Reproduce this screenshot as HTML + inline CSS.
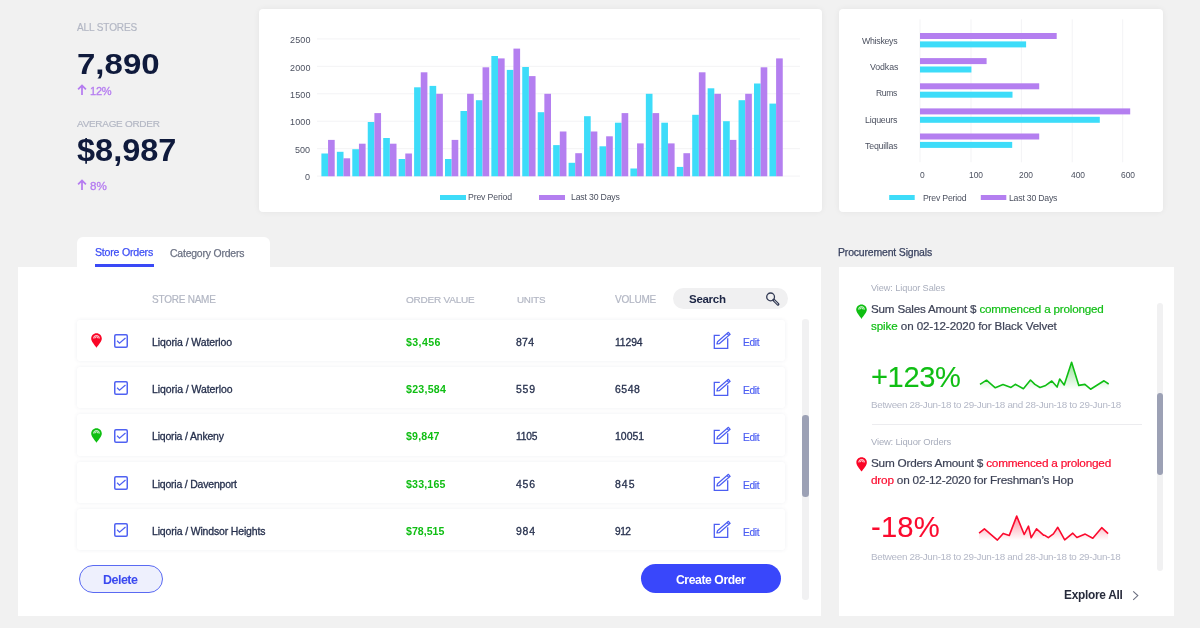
<!DOCTYPE html>
<html><head><meta charset="utf-8"><style>
html,body{margin:0;padding:0;}
body{width:1200px;height:628px;overflow:hidden;background:#f1f1f1;position:relative;font-family:"Liberation Sans",sans-serif;}
.t{position:absolute;white-space:nowrap;will-change:transform;}
.a{position:absolute;}
.card{position:absolute;background:#fff;box-shadow:0 0 6px rgba(0,0,0,0.06);}
.card2{position:absolute;background:#fff;}
.row{position:absolute;background:#fff;border-radius:3px;box-shadow:0 0 4px rgba(30,40,90,0.07);}
</style></head><body>
<div class="card" style="left:259px;top:9px;width:562.5px;height:203px;border-radius:4px"></div><div class="card" style="left:838.5px;top:9px;width:324.5px;height:203px;border-radius:4px"></div><svg class="a" style="left:0;top:0" width="1200" height="220"><rect x="317" y="38.40" width="483" height="1" fill="#f3f3f5"/><rect x="317" y="65.84" width="483" height="1" fill="#f3f3f5"/><rect x="317" y="93.28" width="483" height="1" fill="#f3f3f5"/><rect x="317" y="120.72" width="483" height="1" fill="#f3f3f5"/><rect x="317" y="148.16" width="483" height="1" fill="#f3f3f5"/><rect x="317" y="175.60" width="483" height="1" fill="#f3f3f5"/><rect x="321.40" y="153.50" width="6.65" height="22.80" fill="#3ddcf9"/><rect x="328.05" y="139.90" width="6.65" height="36.40" fill="#b47ff0"/><rect x="336.85" y="151.80" width="6.65" height="24.50" fill="#3ddcf9"/><rect x="343.50" y="158.30" width="6.65" height="18.00" fill="#b47ff0"/><rect x="352.30" y="149.20" width="6.65" height="27.10" fill="#3ddcf9"/><rect x="358.95" y="143.70" width="6.65" height="32.60" fill="#b47ff0"/><rect x="367.75" y="122.00" width="6.65" height="54.30" fill="#3ddcf9"/><rect x="374.40" y="113.10" width="6.65" height="63.20" fill="#b47ff0"/><rect x="383.20" y="138.00" width="6.65" height="38.30" fill="#3ddcf9"/><rect x="389.85" y="143.70" width="6.65" height="32.60" fill="#b47ff0"/><rect x="398.65" y="159.00" width="6.65" height="17.30" fill="#3ddcf9"/><rect x="405.30" y="153.50" width="6.65" height="22.80" fill="#b47ff0"/><rect x="414.10" y="87.30" width="6.65" height="89.00" fill="#3ddcf9"/><rect x="420.75" y="72.30" width="6.65" height="104.00" fill="#b47ff0"/><rect x="429.55" y="85.90" width="6.65" height="90.40" fill="#3ddcf9"/><rect x="436.20" y="93.80" width="6.65" height="82.50" fill="#b47ff0"/><rect x="445.00" y="159.00" width="6.65" height="17.30" fill="#3ddcf9"/><rect x="451.65" y="139.90" width="6.65" height="36.40" fill="#b47ff0"/><rect x="460.45" y="111.00" width="6.65" height="65.30" fill="#3ddcf9"/><rect x="467.10" y="93.80" width="6.65" height="82.50" fill="#b47ff0"/><rect x="475.90" y="100.20" width="6.65" height="76.10" fill="#3ddcf9"/><rect x="482.55" y="67.30" width="6.65" height="109.00" fill="#b47ff0"/><rect x="491.35" y="56.00" width="6.65" height="120.30" fill="#3ddcf9"/><rect x="498.00" y="58.40" width="6.65" height="117.90" fill="#b47ff0"/><rect x="506.80" y="69.90" width="6.65" height="106.40" fill="#3ddcf9"/><rect x="513.45" y="48.60" width="6.65" height="127.70" fill="#b47ff0"/><rect x="522.25" y="67.00" width="6.65" height="109.30" fill="#3ddcf9"/><rect x="528.90" y="76.10" width="6.65" height="100.20" fill="#b47ff0"/><rect x="537.70" y="112.20" width="6.65" height="64.10" fill="#3ddcf9"/><rect x="544.35" y="93.80" width="6.65" height="82.50" fill="#b47ff0"/><rect x="553.15" y="145.10" width="6.65" height="31.20" fill="#3ddcf9"/><rect x="559.80" y="131.50" width="6.65" height="44.80" fill="#b47ff0"/><rect x="568.60" y="162.80" width="6.65" height="13.50" fill="#3ddcf9"/><rect x="575.25" y="153.20" width="6.65" height="23.10" fill="#b47ff0"/><rect x="584.05" y="116.20" width="6.65" height="60.10" fill="#3ddcf9"/><rect x="590.70" y="131.50" width="6.65" height="44.80" fill="#b47ff0"/><rect x="599.50" y="146.30" width="6.65" height="30.00" fill="#3ddcf9"/><rect x="606.15" y="136.30" width="6.65" height="40.00" fill="#b47ff0"/><rect x="614.95" y="122.70" width="6.65" height="53.60" fill="#3ddcf9"/><rect x="621.60" y="113.10" width="6.65" height="63.20" fill="#b47ff0"/><rect x="630.40" y="168.50" width="6.65" height="7.80" fill="#3ddcf9"/><rect x="637.05" y="143.40" width="6.65" height="32.90" fill="#b47ff0"/><rect x="645.85" y="93.80" width="6.65" height="82.50" fill="#3ddcf9"/><rect x="652.50" y="113.10" width="6.65" height="63.20" fill="#b47ff0"/><rect x="661.30" y="122.70" width="6.65" height="53.60" fill="#3ddcf9"/><rect x="667.95" y="143.40" width="6.65" height="32.90" fill="#b47ff0"/><rect x="676.75" y="166.90" width="6.65" height="9.40" fill="#3ddcf9"/><rect x="683.40" y="153.20" width="6.65" height="23.10" fill="#b47ff0"/><rect x="692.20" y="114.80" width="6.65" height="61.50" fill="#3ddcf9"/><rect x="698.85" y="72.30" width="6.65" height="104.00" fill="#b47ff0"/><rect x="707.65" y="88.30" width="6.65" height="88.00" fill="#3ddcf9"/><rect x="714.30" y="93.80" width="6.65" height="82.50" fill="#b47ff0"/><rect x="723.10" y="121.20" width="6.65" height="55.10" fill="#3ddcf9"/><rect x="729.75" y="139.90" width="6.65" height="36.40" fill="#b47ff0"/><rect x="738.55" y="100.20" width="6.65" height="76.10" fill="#3ddcf9"/><rect x="745.20" y="93.80" width="6.65" height="82.50" fill="#b47ff0"/><rect x="754.00" y="83.50" width="6.65" height="92.80" fill="#3ddcf9"/><rect x="760.65" y="67.30" width="6.65" height="109.00" fill="#b47ff0"/><rect x="769.45" y="103.60" width="6.65" height="72.70" fill="#3ddcf9"/><rect x="776.10" y="58.40" width="6.65" height="117.90" fill="#b47ff0"/><rect x="440" y="195" width="26" height="5" fill="#3ddcf9"/><rect x="539" y="195" width="26" height="5" fill="#b47ff0"/><rect x="919.5" y="19.3" width="1" height="143" fill="#f3f3f5"/><rect x="970.5" y="19.3" width="1" height="143" fill="#f3f3f5"/><rect x="1020.9" y="19.3" width="1" height="143" fill="#f3f3f5"/><rect x="1071.7" y="19.3" width="1" height="143" fill="#f3f3f5"/><rect x="1122.2" y="19.3" width="1" height="143" fill="#f3f3f5"/><rect x="920" y="33.0" width="136.70" height="6" fill="#b47ff0"/><rect x="920" y="41.40" width="106.10" height="6" fill="#3ddcf9"/><rect x="920" y="58.1" width="66.60" height="6" fill="#b47ff0"/><rect x="920" y="66.50" width="51.40" height="6" fill="#3ddcf9"/><rect x="920" y="83.3" width="119.20" height="6" fill="#b47ff0"/><rect x="920" y="91.70" width="92.50" height="6" fill="#3ddcf9"/><rect x="920" y="108.4" width="210.20" height="6" fill="#b47ff0"/><rect x="920" y="116.80" width="179.80" height="6" fill="#3ddcf9"/><rect x="920" y="133.5" width="119.20" height="6" fill="#b47ff0"/><rect x="920" y="141.90" width="92.20" height="6" fill="#3ddcf9"/><rect x="889.2" y="195" width="25.5" height="5" fill="#3ddcf9"/><rect x="980.8" y="195" width="25.5" height="5" fill="#b47ff0"/></svg><div class="card2" style="left:77px;top:237px;width:193px;height:40px;border-radius:6px 6px 0 0"></div><div class="card2" style="left:18px;top:267px;width:803px;height:349px"></div><div class="a" style="left:95px;top:264px;width:58.5px;height:3px;background:#3a49f6"></div><div class="a" style="left:672.5px;top:288px;width:115px;height:21px;border-radius:11px;background:#f0f0f1"></div><svg class="a" style="left:764px;top:290px" width="18" height="18" viewBox="0 0 18 18"><circle cx="6.6" cy="6.9" r="3.9" fill="none" stroke="#333b55" stroke-width="1.3"/><path d="M9.7 10.0L14.0 14.3" stroke="#333b55" stroke-width="2.9" stroke-linecap="round"/><path d="M10.4 10.7L13.6 13.9" stroke="#f0f0f1" stroke-width="0.9" stroke-linecap="round"/></svg><div class="row" style="left:77px;top:319.5px;width:708px;height:41.5px"></div><svg class="a" style="left:90.6px;top:333.0px" width="11" height="15" viewBox="0 0 11 15"><path d="M5.5 0.3C8.5 0.3 10.8 2.6 10.8 5.5C10.8 8.6 7.6 11.5 5.5 14.8C3.4 11.5 0.2 8.6 0.2 5.5C0.2 2.6 2.5 0.3 5.5 0.3Z" fill="#fa0526"/><path d="M2.6 5.4A2.9 2.9 0 0 1 8.4 5.4" fill="none" stroke="#fff" stroke-width="0.9"/><path d="M3.9 5.4A1.6 1.6 0 0 1 7.1 5.4" fill="none" stroke="#fff" stroke-width="0.9"/><path d="M2.2 5.5H8.8" stroke="#fa0526" stroke-width="0"/></svg><svg class="a" style="left:114px;top:334px" width="14" height="14" viewBox="0 0 14 14"><rect x="0.75" y="0.75" width="12.5" height="12.5" rx="1.2" fill="none" stroke="#5062f2" stroke-width="1.5"/><path d="M3.1 6.8L5.5 9.2L11.5 4.0" fill="none" stroke="#5062f2" stroke-width="1.3"/></svg><svg class="a" style="left:713px;top:331.00px" width="18" height="18" viewBox="0 0 18 18"><path d="M6.8 4.3H1.3V17.4H14.7V7.3" fill="none" stroke="#4c5ef2" stroke-width="1.3"/><path d="M3.9 13.0L4.55 10.72L15.45 1.32L17.15 3.28L6.25 12.68Z M14.05 2.52L15.75 4.48" fill="none" stroke="#4c5ef2" stroke-width="1.2" stroke-linejoin="round"/></svg><div class="row" style="left:77px;top:366.84px;width:708px;height:41.5px"></div><svg class="a" style="left:114px;top:381px" width="14" height="14" viewBox="0 0 14 14"><rect x="0.75" y="0.75" width="12.5" height="12.5" rx="1.2" fill="none" stroke="#5062f2" stroke-width="1.5"/><path d="M3.1 6.8L5.5 9.2L11.5 4.0" fill="none" stroke="#5062f2" stroke-width="1.3"/></svg><svg class="a" style="left:713px;top:378.34px" width="18" height="18" viewBox="0 0 18 18"><path d="M6.8 4.3H1.3V17.4H14.7V7.3" fill="none" stroke="#4c5ef2" stroke-width="1.3"/><path d="M3.9 13.0L4.55 10.72L15.45 1.32L17.15 3.28L6.25 12.68Z M14.05 2.52L15.75 4.48" fill="none" stroke="#4c5ef2" stroke-width="1.2" stroke-linejoin="round"/></svg><div class="row" style="left:77px;top:414.18px;width:708px;height:41.5px"></div><svg class="a" style="left:90.6px;top:427.68px" width="11" height="15" viewBox="0 0 11 15"><path d="M5.5 0.3C8.5 0.3 10.8 2.6 10.8 5.5C10.8 8.6 7.6 11.5 5.5 14.8C3.4 11.5 0.2 8.6 0.2 5.5C0.2 2.6 2.5 0.3 5.5 0.3Z" fill="#0fbf12"/><path d="M2.6 5.4A2.9 2.9 0 0 1 8.4 5.4" fill="none" stroke="#fff" stroke-width="0.9"/><path d="M3.9 5.4A1.6 1.6 0 0 1 7.1 5.4" fill="none" stroke="#fff" stroke-width="0.9"/><path d="M2.2 5.5H8.8" stroke="#0fbf12" stroke-width="0"/></svg><svg class="a" style="left:114px;top:429px" width="14" height="14" viewBox="0 0 14 14"><rect x="0.75" y="0.75" width="12.5" height="12.5" rx="1.2" fill="none" stroke="#5062f2" stroke-width="1.5"/><path d="M3.1 6.8L5.5 9.2L11.5 4.0" fill="none" stroke="#5062f2" stroke-width="1.3"/></svg><svg class="a" style="left:713px;top:425.68px" width="18" height="18" viewBox="0 0 18 18"><path d="M6.8 4.3H1.3V17.4H14.7V7.3" fill="none" stroke="#4c5ef2" stroke-width="1.3"/><path d="M3.9 13.0L4.55 10.72L15.45 1.32L17.15 3.28L6.25 12.68Z M14.05 2.52L15.75 4.48" fill="none" stroke="#4c5ef2" stroke-width="1.2" stroke-linejoin="round"/></svg><div class="row" style="left:77px;top:461.52px;width:708px;height:41.5px"></div><svg class="a" style="left:114px;top:476px" width="14" height="14" viewBox="0 0 14 14"><rect x="0.75" y="0.75" width="12.5" height="12.5" rx="1.2" fill="none" stroke="#5062f2" stroke-width="1.5"/><path d="M3.1 6.8L5.5 9.2L11.5 4.0" fill="none" stroke="#5062f2" stroke-width="1.3"/></svg><svg class="a" style="left:713px;top:473.02px" width="18" height="18" viewBox="0 0 18 18"><path d="M6.8 4.3H1.3V17.4H14.7V7.3" fill="none" stroke="#4c5ef2" stroke-width="1.3"/><path d="M3.9 13.0L4.55 10.72L15.45 1.32L17.15 3.28L6.25 12.68Z M14.05 2.52L15.75 4.48" fill="none" stroke="#4c5ef2" stroke-width="1.2" stroke-linejoin="round"/></svg><div class="row" style="left:77px;top:508.86px;width:708px;height:41.5px"></div><svg class="a" style="left:114px;top:523px" width="14" height="14" viewBox="0 0 14 14"><rect x="0.75" y="0.75" width="12.5" height="12.5" rx="1.2" fill="none" stroke="#5062f2" stroke-width="1.5"/><path d="M3.1 6.8L5.5 9.2L11.5 4.0" fill="none" stroke="#5062f2" stroke-width="1.3"/></svg><svg class="a" style="left:713px;top:520.36px" width="18" height="18" viewBox="0 0 18 18"><path d="M6.8 4.3H1.3V17.4H14.7V7.3" fill="none" stroke="#4c5ef2" stroke-width="1.3"/><path d="M3.9 13.0L4.55 10.72L15.45 1.32L17.15 3.28L6.25 12.68Z M14.05 2.52L15.75 4.48" fill="none" stroke="#4c5ef2" stroke-width="1.2" stroke-linejoin="round"/></svg><div class="a" style="left:802.2px;top:319.3px;width:6.4px;height:281px;border-radius:3.2px;background:#f1f1f2"></div><div class="a" style="left:802.1px;top:415.4px;width:6.6px;height:81.2px;border-radius:3.3px;background:#9ca1b5"></div><div class="a" style="left:79px;top:564.6px;width:84.2px;height:28.6px;box-sizing:border-box;border:1.2px solid #5a6af2;border-radius:15px;background:#eef0fd"></div><div class="a" style="left:640.8px;top:564.2px;width:140px;height:28.8px;border-radius:15px;background:#3947fb"></div><div class="card2" style="left:838.5px;top:267px;width:335.5px;height:349px"></div><svg class="a" style="left:856px;top:304px" width="11" height="15.2" viewBox="0 0 11 15"><path d="M5.5 0.3C8.5 0.3 10.8 2.6 10.8 5.5C10.8 8.6 7.6 11.5 5.5 14.8C3.4 11.5 0.2 8.6 0.2 5.5C0.2 2.6 2.5 0.3 5.5 0.3Z" fill="#0fbf12"/><path d="M2.6 5.4A2.9 2.9 0 0 1 8.4 5.4" fill="none" stroke="#fff" stroke-width="0.9"/><path d="M3.9 5.4A1.6 1.6 0 0 1 7.1 5.4" fill="none" stroke="#fff" stroke-width="0.9"/><path d="M2.2 5.5H8.8" stroke="#0fbf12" stroke-width="0"/></svg><div class="a" style="left:872px;top:424.3px;width:269.5px;height:1px;background:#ececef"></div><svg class="a" style="left:856px;top:457px" width="11.2" height="14.8" viewBox="0 0 11 15"><path d="M5.5 0.3C8.5 0.3 10.8 2.6 10.8 5.5C10.8 8.6 7.6 11.5 5.5 14.8C3.4 11.5 0.2 8.6 0.2 5.5C0.2 2.6 2.5 0.3 5.5 0.3Z" fill="#fa0526"/><path d="M2.6 5.4A2.9 2.9 0 0 1 8.4 5.4" fill="none" stroke="#fff" stroke-width="0.9"/><path d="M3.9 5.4A1.6 1.6 0 0 1 7.1 5.4" fill="none" stroke="#fff" stroke-width="0.9"/><path d="M2.2 5.5H8.8" stroke="#fa0526" stroke-width="0"/></svg><svg class="a" style="left:0;top:0" width="1200" height="628"><defs><linearGradient id="gg" x1="0" y1="362.3" x2="0" y2="389.5" gradientUnits="userSpaceOnUse"><stop offset="0" stop-color="#10be14" stop-opacity="0.45"/><stop offset="1" stop-color="#10be14" stop-opacity="0"/></linearGradient></defs><path d="M980,389.5 L980.0,384.4 L986.5,380.2 L995.3,387.8 L1003.0,384.6 L1011.0,387.4 L1015.3,384.3 L1023.4,388.8 L1030.5,380.0 L1034.9,384.4 L1040.0,387.5 L1045.7,385.4 L1051.8,381.0 L1057.1,387.1 L1059.7,379.1 L1064.2,384.9 L1071.6,362.3 L1078.8,385.4 L1084.9,384.4 L1090.6,389.2 L1104.0,380.8 L1108.7,384.0 L1108.7,389.5 Z" fill="url(#gg)"/><polyline points="980.0,384.4 986.5,380.2 995.3,387.8 1003.0,384.6 1011.0,387.4 1015.3,384.3 1023.4,388.8 1030.5,380.0 1034.9,384.4 1040.0,387.5 1045.7,385.4 1051.8,381.0 1057.1,387.1 1059.7,379.1 1064.2,384.9 1071.6,362.3 1078.8,385.4 1084.9,384.4 1090.6,389.2 1104.0,380.8 1108.7,384.0" fill="none" stroke="#10be14" stroke-width="1.6" stroke-linejoin="round"/></svg><svg class="a" style="left:0;top:0" width="1200" height="628"><defs><linearGradient id="rg" x1="0" y1="516.1" x2="0" y2="540.5" gradientUnits="userSpaceOnUse"><stop offset="0" stop-color="#fb0a2e" stop-opacity="0.45"/><stop offset="1" stop-color="#fb0a2e" stop-opacity="0"/></linearGradient></defs><path d="M979.1,540.5 L979.1,533.1 L984.4,528.8 L997.4,540.1 L1003.2,533.4 L1009.3,535.4 L1016.7,516.1 L1024.2,534.5 L1028.5,526.2 L1031.2,537.7 L1036.5,528.8 L1043.5,535.1 L1044.8,535.3 L1048.3,537.7 L1053.4,533.9 L1057.8,527.3 L1064.7,539.9 L1072.8,533.2 L1076.9,537.5 L1085.2,534.1 L1092.8,538.3 L1101.7,527.7 L1108.1,533.6 L1108.1,540.5 Z" fill="url(#rg)"/><polyline points="979.1,533.1 984.4,528.8 997.4,540.1 1003.2,533.4 1009.3,535.4 1016.7,516.1 1024.2,534.5 1028.5,526.2 1031.2,537.7 1036.5,528.8 1043.5,535.1 1044.8,535.3 1048.3,537.7 1053.4,533.9 1057.8,527.3 1064.7,539.9 1072.8,533.2 1076.9,537.5 1085.2,534.1 1092.8,538.3 1101.7,527.7 1108.1,533.6" fill="none" stroke="#fb0a2e" stroke-width="1.6" stroke-linejoin="round"/></svg><div class="a" style="left:1156.7px;top:302.8px;width:6.5px;height:268.5px;border-radius:3.2px;background:#f1f1f2"></div><div class="a" style="left:1156.7px;top:393px;width:6.5px;height:81.7px;border-radius:3.2px;background:#9ca1b5"></div><svg class="a" style="left:1131px;top:590px" width="10" height="11" viewBox="0 0 10 11"><path d="M2.2 1.4L6.8 5.6L2.2 9.8" fill="none" stroke="#6b6f80" stroke-width="1.1"/></svg><svg class="a" style="left:77px;top:84px" width="10" height="12" viewBox="0 0 10 12"><path d="M5 11V1.6M1.1 5.4L5 1.4L8.9 5.4" fill="none" stroke="#b57cf0" stroke-width="1.75"/></svg><svg class="a" style="left:77px;top:178.8px" width="10" height="12" viewBox="0 0 10 12"><path d="M5 11V1.6M1.1 5.4L5 1.4L8.9 5.4" fill="none" stroke="#b57cf0" stroke-width="1.75"/></svg>
<div class="t" id="s1" style="top:22.73px;font-size:10.00px;line-height:10.00px;color:#b3b7c4;font-weight:400;letter-spacing:-0.111px;left:77.40px;-webkit-text-stroke:0.2px currentColor;">ALL STORES</div><div class="t" id="s2" style="top:48.52px;font-size:29.51px;line-height:29.51px;color:#0f1a3c;font-weight:700;letter-spacing:0.000px;left:76.80px;transform:scaleX(1.1196);transform-origin:left center;">7,890</div><div class="t" id="s3" style="top:86.44px;font-size:11.06px;line-height:11.06px;color:#b57cf0;font-weight:400;letter-spacing:-0.250px;left:90.00px;-webkit-text-stroke:0.3px currentColor;">12%</div><div class="t" id="s4" style="top:119.49px;font-size:9.93px;line-height:9.93px;color:#b3b7c4;font-weight:400;letter-spacing:-0.250px;left:77.00px;-webkit-text-stroke:0.2px currentColor;">AVERAGE ORDER</div><div class="t" id="s5" style="top:135.44px;font-size:31.25px;line-height:31.25px;color:#0f1a3c;font-weight:700;letter-spacing:0.000px;left:77.40px;transform:scaleX(1.0400);transform-origin:left center;">$8,987</div><div class="t" id="s6" style="top:179.75px;font-size:11.63px;line-height:11.63px;color:#b57cf0;font-weight:400;letter-spacing:0.000px;left:90.00px;-webkit-text-stroke:0.3px currentColor;">8%</div><div class="t" id="ya0" style="top:36.47px;font-size:9.01px;line-height:9.01px;color:#4c5160;font-weight:400;letter-spacing:0.167px;right:889.80px;text-align:right;">2500</div><div class="t" id="ya1" style="top:63.91px;font-size:9.01px;line-height:9.01px;color:#4c5160;font-weight:400;letter-spacing:0.167px;right:889.80px;text-align:right;">2000</div><div class="t" id="ya2" style="top:91.35px;font-size:9.01px;line-height:9.01px;color:#4c5160;font-weight:400;letter-spacing:0.167px;right:889.80px;text-align:right;">1500</div><div class="t" id="ya3" style="top:117.79px;font-size:9.01px;line-height:9.01px;color:#4c5160;font-weight:400;letter-spacing:0.167px;right:889.80px;text-align:right;">1000</div><div class="t" id="ya4" style="top:146.23px;font-size:9.01px;line-height:9.01px;color:#4c5160;font-weight:400;letter-spacing:0.000px;right:889.80px;text-align:right;">500</div><div class="t" id="ya5" style="top:172.67px;font-size:9.01px;line-height:9.01px;color:#4c5160;font-weight:400;letter-spacing:0.000px;right:889.80px;text-align:right;">0</div><div class="t" id="lg1" style="top:192.92px;font-size:8.72px;line-height:8.72px;color:#4c5160;font-weight:400;letter-spacing:-0.150px;left:467.80px;">Prev Period</div><div class="t" id="lg2" style="top:192.92px;font-size:8.72px;line-height:8.72px;color:#4c5160;font-weight:400;letter-spacing:-0.182px;left:571.20px;">Last 30 Days</div><div class="t" id="hl0" style="top:36.75px;font-size:8.80px;line-height:8.80px;color:#4c5160;font-weight:400;letter-spacing:-0.286px;right:302.60px;text-align:right;">Whiskeys</div><div class="t" id="hl1" style="top:63.44px;font-size:8.81px;line-height:8.81px;color:#4c5160;font-weight:400;letter-spacing:-0.100px;right:301.60px;text-align:right;">Vodkas</div><div class="t" id="hl2" style="top:89.05px;font-size:8.56px;line-height:8.56px;color:#4c5160;font-weight:400;letter-spacing:-0.333px;right:302.60px;text-align:right;">Rums</div><div class="t" id="hl3" style="top:115.60px;font-size:8.86px;line-height:8.86px;color:#4c5160;font-weight:400;letter-spacing:-0.214px;right:302.60px;text-align:right;">Liqueurs</div><div class="t" id="hl4" style="top:142.24px;font-size:8.81px;line-height:8.81px;color:#4c5160;font-weight:400;letter-spacing:-0.188px;right:302.60px;text-align:right;">Tequillas</div><div class="t" id="hx0" style="top:171.36px;font-size:8.43px;line-height:8.43px;color:#4c5160;font-weight:400;letter-spacing:0.000px;left:919.80px;">0</div><div class="t" id="hx1" style="top:171.36px;font-size:8.43px;line-height:8.43px;color:#4c5160;font-weight:400;letter-spacing:0.000px;left:969.40px;">100</div><div class="t" id="hx2" style="top:171.36px;font-size:8.43px;line-height:8.43px;color:#4c5160;font-weight:400;letter-spacing:0.000px;left:1019.20px;">200</div><div class="t" id="hx3" style="top:171.36px;font-size:8.43px;line-height:8.43px;color:#4c5160;font-weight:400;letter-spacing:0.000px;left:1071.00px;">400</div><div class="t" id="hx4" style="top:171.36px;font-size:8.43px;line-height:8.43px;color:#4c5160;font-weight:400;letter-spacing:0.000px;left:1120.80px;">600</div><div class="t" id="lg3" style="top:193.92px;font-size:8.72px;line-height:8.72px;color:#4c5160;font-weight:400;letter-spacing:-0.200px;left:923.20px;">Prev Period</div><div class="t" id="lg4" style="top:193.92px;font-size:8.72px;line-height:8.72px;color:#4c5160;font-weight:400;letter-spacing:-0.227px;left:1009.00px;">Last 30 Days</div><div class="t" id="tb1" style="top:247.42px;font-size:10.61px;line-height:10.61px;color:#3d4ef5;font-weight:400;letter-spacing:-0.227px;left:95.00px;-webkit-text-stroke:0.25px currentColor;">Store Orders</div><div class="t" id="tb2" style="top:248.77px;font-size:10.42px;line-height:10.42px;color:#6b7183;font-weight:400;letter-spacing:-0.179px;left:169.80px;-webkit-text-stroke:0.25px currentColor;">Category Orders</div><div class="t" id="h1" style="top:294.84px;font-size:9.99px;line-height:9.99px;color:#b3b7c4;font-weight:400;letter-spacing:-0.222px;left:152.40px;-webkit-text-stroke:0.2px currentColor;">STORE NAME</div><div class="t" id="h2" style="top:294.86px;font-size:9.97px;line-height:9.97px;color:#b3b7c4;font-weight:400;letter-spacing:-0.200px;left:405.80px;-webkit-text-stroke:0.2px currentColor;">ORDER VALUE</div><div class="t" id="h3" style="top:294.99px;font-size:9.82px;line-height:9.82px;color:#b3b7c4;font-weight:400;letter-spacing:-0.250px;left:516.80px;-webkit-text-stroke:0.2px currentColor;">UNITS</div><div class="t" id="h4" style="top:294.81px;font-size:10.03px;line-height:10.03px;color:#b3b7c4;font-weight:400;letter-spacing:-0.200px;left:615.20px;-webkit-text-stroke:0.2px currentColor;">VOLUME</div><div class="t" id="srch" style="top:293.63px;font-size:11.54px;line-height:11.54px;color:#1d2645;font-weight:700;letter-spacing:-0.300px;left:688.60px;">Search</div><div class="t" id="rn0" style="top:337.64px;font-size:10.47px;line-height:10.47px;color:#26304d;font-weight:400;letter-spacing:-0.088px;left:152.40px;-webkit-text-stroke:0.3px currentColor;">Liqoria / Waterloo</div><div class="t" id="rv0" style="top:336.52px;font-size:10.61px;line-height:10.61px;color:#10be14;font-weight:700;letter-spacing:0.400px;left:406.20px;">$3,456</div><div class="t" id="ru0" style="top:337.64px;font-size:10.47px;line-height:10.47px;color:#26304d;font-weight:400;letter-spacing:0.250px;left:516.20px;-webkit-text-stroke:0.3px currentColor;">874</div><div class="t" id="ro0" style="top:337.73px;font-size:10.36px;line-height:10.36px;color:#26304d;font-weight:400;letter-spacing:-0.125px;left:615.20px;-webkit-text-stroke:0.3px currentColor;">11294</div><div class="t" id="re0" style="top:337.87px;font-size:10.19px;line-height:10.19px;color:#4c5ef2;font-weight:400;letter-spacing:-0.333px;left:743.20px;-webkit-text-stroke:0.2px currentColor;">Edit</div><div class="t" id="rn1" style="top:384.98px;font-size:10.47px;line-height:10.47px;color:#26304d;font-weight:400;letter-spacing:-0.059px;left:152.40px;-webkit-text-stroke:0.3px currentColor;">Liqoria / Waterloo</div><div class="t" id="rv1" style="top:383.86px;font-size:10.61px;line-height:10.61px;color:#10be14;font-weight:700;letter-spacing:0.250px;left:406.20px;">$23,584</div><div class="t" id="ru1" style="top:384.98px;font-size:10.47px;line-height:10.47px;color:#26304d;font-weight:400;letter-spacing:0.750px;left:516.20px;-webkit-text-stroke:0.3px currentColor;">559</div><div class="t" id="ro1" style="top:384.98px;font-size:10.47px;line-height:10.47px;color:#26304d;font-weight:400;letter-spacing:0.500px;left:615.20px;-webkit-text-stroke:0.3px currentColor;">6548</div><div class="t" id="re1" style="top:386.21px;font-size:10.19px;line-height:10.19px;color:#4c5ef2;font-weight:400;letter-spacing:-0.333px;left:743.20px;-webkit-text-stroke:0.2px currentColor;">Edit</div><div class="t" id="rn2" style="top:432.32px;font-size:10.47px;line-height:10.47px;color:#26304d;font-weight:400;letter-spacing:-0.167px;left:152.40px;-webkit-text-stroke:0.3px currentColor;">Liqoria / Ankeny</div><div class="t" id="rv2" style="top:431.20px;font-size:10.61px;line-height:10.61px;color:#10be14;font-weight:700;letter-spacing:0.200px;left:406.20px;">$9,847</div><div class="t" id="ru2" style="top:431.53px;font-size:10.22px;line-height:10.22px;color:#26304d;font-weight:400;letter-spacing:-0.167px;left:516.20px;-webkit-text-stroke:0.3px currentColor;">1105</div><div class="t" id="ro2" style="top:432.32px;font-size:10.47px;line-height:10.47px;color:#26304d;font-weight:400;letter-spacing:-0.000px;left:615.20px;-webkit-text-stroke:0.3px currentColor;">10051</div><div class="t" id="re2" style="top:432.55px;font-size:10.19px;line-height:10.19px;color:#4c5ef2;font-weight:400;letter-spacing:-0.333px;left:743.20px;-webkit-text-stroke:0.2px currentColor;">Edit</div><div class="t" id="rn3" style="top:479.66px;font-size:10.47px;line-height:10.47px;color:#26304d;font-weight:400;letter-spacing:-0.194px;left:152.40px;-webkit-text-stroke:0.3px currentColor;">Liqoria / Davenport</div><div class="t" id="rv3" style="top:478.54px;font-size:10.61px;line-height:10.61px;color:#10be14;font-weight:700;letter-spacing:0.167px;left:406.20px;">$33,165</div><div class="t" id="ru3" style="top:479.66px;font-size:10.47px;line-height:10.47px;color:#26304d;font-weight:400;letter-spacing:0.750px;left:516.20px;-webkit-text-stroke:0.3px currentColor;">456</div><div class="t" id="ro3" style="top:479.66px;font-size:10.47px;line-height:10.47px;color:#26304d;font-weight:400;letter-spacing:1.000px;left:615.20px;-webkit-text-stroke:0.3px currentColor;">845</div><div class="t" id="re3" style="top:480.89px;font-size:10.19px;line-height:10.19px;color:#4c5ef2;font-weight:400;letter-spacing:-0.333px;left:743.20px;-webkit-text-stroke:0.2px currentColor;">Edit</div><div class="t" id="rn4" style="top:527.00px;font-size:10.47px;line-height:10.47px;color:#26304d;font-weight:400;letter-spacing:-0.146px;left:152.40px;-webkit-text-stroke:0.3px currentColor;">Liqoria / Windsor Heights</div><div class="t" id="rv4" style="top:525.88px;font-size:10.61px;line-height:10.61px;color:#10be14;font-weight:700;letter-spacing:0.000px;left:406.20px;">$78,515</div><div class="t" id="ru4" style="top:527.00px;font-size:10.47px;line-height:10.47px;color:#26304d;font-weight:400;letter-spacing:0.750px;left:516.20px;-webkit-text-stroke:0.3px currentColor;">984</div><div class="t" id="ro4" style="top:527.25px;font-size:10.17px;line-height:10.17px;color:#26304d;font-weight:400;letter-spacing:-0.500px;left:615.20px;-webkit-text-stroke:0.3px currentColor;">912</div><div class="t" id="re4" style="top:528.23px;font-size:10.19px;line-height:10.19px;color:#4c5ef2;font-weight:400;letter-spacing:-0.333px;left:743.20px;-webkit-text-stroke:0.2px currentColor;">Edit</div><div class="t" id="bd" style="top:574.23px;font-size:12.49px;line-height:12.49px;color:#3a49f0;font-weight:700;letter-spacing:-0.500px;left:102.80px;">Delete</div><div class="t" id="bc" style="top:573.50px;font-size:12.16px;line-height:12.16px;color:#ffffff;font-weight:700;letter-spacing:-0.409px;left:675.80px;">Create Order</div><div class="t" id="ps" style="top:247.54px;font-size:10.47px;line-height:10.47px;color:#3a4360;font-weight:400;letter-spacing:-0.167px;left:838.00px;-webkit-text-stroke:0.25px currentColor;">Procurement Signals</div><div class="t" id="v1" style="top:283.55px;font-size:9.16px;line-height:9.16px;color:#a9aebd;font-weight:400;letter-spacing:-0.088px;left:870.80px;">View: Liquor Sales</div><div class="t" id="sg1" style="top:303.45px;font-size:11.63px;line-height:11.63px;color:#3d4256;font-weight:400;letter-spacing:-0.179px;left:871.20px;-webkit-text-stroke:0.2px currentColor;">Sum Sales Amount $ <span style="color:#10be14">commenced a prolonged</span></div><div class="t" id="sg2" style="top:319.65px;font-size:11.63px;line-height:11.63px;color:#3d4256;font-weight:400;letter-spacing:-0.100px;left:871.20px;-webkit-text-stroke:0.2px currentColor;"><span style="color:#10be14">spike</span> on 02-12-2020 for Black Velvet</div><div class="t" id="big1" style="top:363.17px;font-size:29.08px;line-height:29.08px;color:#10be14;font-weight:400;letter-spacing:-0.375px;left:871.40px;-webkit-text-stroke:0.1px currentColor;">+123%</div><div class="t" id="bt1" style="top:400.18px;font-size:9.83px;line-height:9.83px;color:#b4b8c7;font-weight:400;letter-spacing:-0.304px;left:870.80px;">Between 28-Jun-18 to 29-Jun-18 and 28-Jun-18 to 29-Jun-18</div><div class="t" id="v2" style="top:436.60px;font-size:9.45px;line-height:9.45px;color:#a9aebd;font-weight:400;letter-spacing:-0.167px;left:871.00px;">View: Liquor Orders</div><div class="t" id="sg3" style="top:457.03px;font-size:11.78px;line-height:11.78px;color:#3d4256;font-weight:400;letter-spacing:-0.225px;left:871.00px;-webkit-text-stroke:0.2px currentColor;">Sum Orders Amount $ <span style="color:#fb0a2e">commenced a prolonged</span></div><div class="t" id="sg4" style="top:474.01px;font-size:11.79px;line-height:11.79px;color:#3d4256;font-weight:400;letter-spacing:-0.208px;left:871.00px;-webkit-text-stroke:0.2px currentColor;"><span style="color:#fb0a2e">drop</span> on 02-12-2020 for Freshman’s Hop</div><div class="t" id="big2" style="top:513.26px;font-size:29.22px;line-height:29.22px;color:#fb0a2e;font-weight:400;letter-spacing:0.167px;left:871.20px;-webkit-text-stroke:0.1px currentColor;">-18%</div><div class="t" id="bt2" style="top:552.43px;font-size:9.83px;line-height:9.83px;color:#b4b8c7;font-weight:400;letter-spacing:-0.312px;left:871.00px;">Between 28-Jun-18 to 29-Jun-18 and 28-Jun-18 to 29-Jun-18</div><div class="t" id="ex" style="top:589.94px;font-size:11.88px;line-height:11.88px;color:#272b3b;font-weight:700;letter-spacing:-0.275px;left:1064.00px;">Explore All</div>
</body></html>
